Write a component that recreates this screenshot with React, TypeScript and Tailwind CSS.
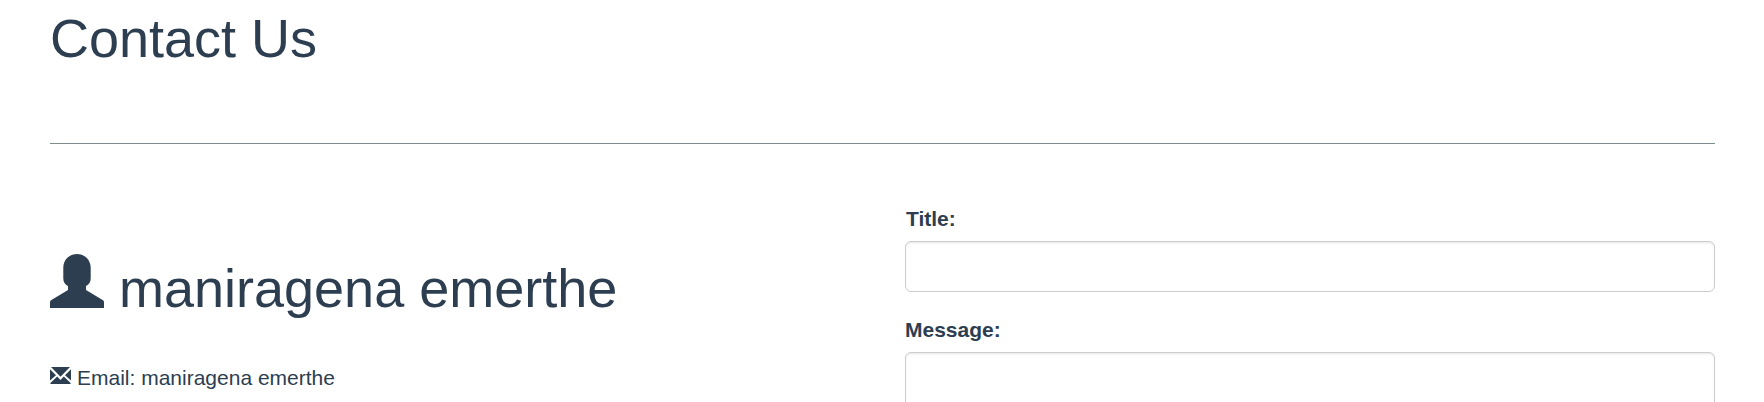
function UserIcon() {
  return (
    <svg className="-mt-[5px] block h-[54px] w-[54px] shrink-0" viewBox="0 0 54 54" fill="currentColor" aria-hidden="true">
      <path d="M27 0C34.5 0 40.7 5.8 40.7 13.5V24.5C40.7 28 39 30.5 36 32V36L53 46.3Q54 47 54 48.3V54H0V48.3Q0 47 1 46.3L18 36V32C15 30.5 13.3 28 13.3 24.5V13.5C13.3 5.8 19.5 0 27 0Z" />
    </svg>
  );
}

function EnvelopeIcon() {
  return (
    <svg className="mt-[4px] block h-[17px] w-[21px] shrink-0" viewBox="0 0 21 17" fill="currentColor" aria-hidden="true">
      <path d="M1 0H20L10.5 9.8Z" />
      <path d="M0 2.2L6 8.2L0 13.4Z" />
      <path d="M21 2.2L15 8.2L21 13.4Z" />
      <path d="M0.4 17V16L7.2 9.6L10.5 13L13.8 9.6L20.6 16V17Z" />
    </svg>
  );
}

const fieldClass =
  "block w-full rounded-[6px] border border-[#ccc] bg-white px-[18px] py-[9px] shadow-[inset_0_1.5px_1.5px_rgba(0,0,0,0.075)] outline-none";

export default function App() {
  return (
    <main className="h-[402px] overflow-hidden bg-white px-[50px] pt-[9px] font-['Liberation_Sans',Arial,sans-serif] text-[21px] leading-[30px] text-[#2c3e50]">
      <h1 className="h-[59px] text-[54px] leading-[58px]">Contact Us</h1>
      <hr className="mt-[75px] w-[1665px] border-0 border-t border-[#7f8c8d]" />
      <div className="flex">
        <section className="w-[855px] shrink-0 pt-[115px]">
          <h1 className="flex h-[59px] text-[54px] leading-[58px]">
            <UserIcon />
            <span className="ml-[15px]">maniragena emerthe</span>
          </h1>
          <p className="mt-[45px] flex">
            <EnvelopeIcon />
            <span className="ml-[6px]">Email: maniragena emerthe</span>
          </p>
        </section>
        <form className="w-[810px] shrink-0 pt-[60px]">
          <label htmlFor="title" className="mb-[7px] block h-[30px] pl-px font-bold">Title:</label>
          <input id="title" type="text" className={`${fieldClass} h-[51px]`} />
          <label htmlFor="message" className="mt-[23px] mb-[7px] block h-[30px] font-bold">Message:</label>
          <textarea id="message" className={`${fieldClass} h-[160px] resize-none`} />
        </form>
      </div>
    </main>
  );
}
